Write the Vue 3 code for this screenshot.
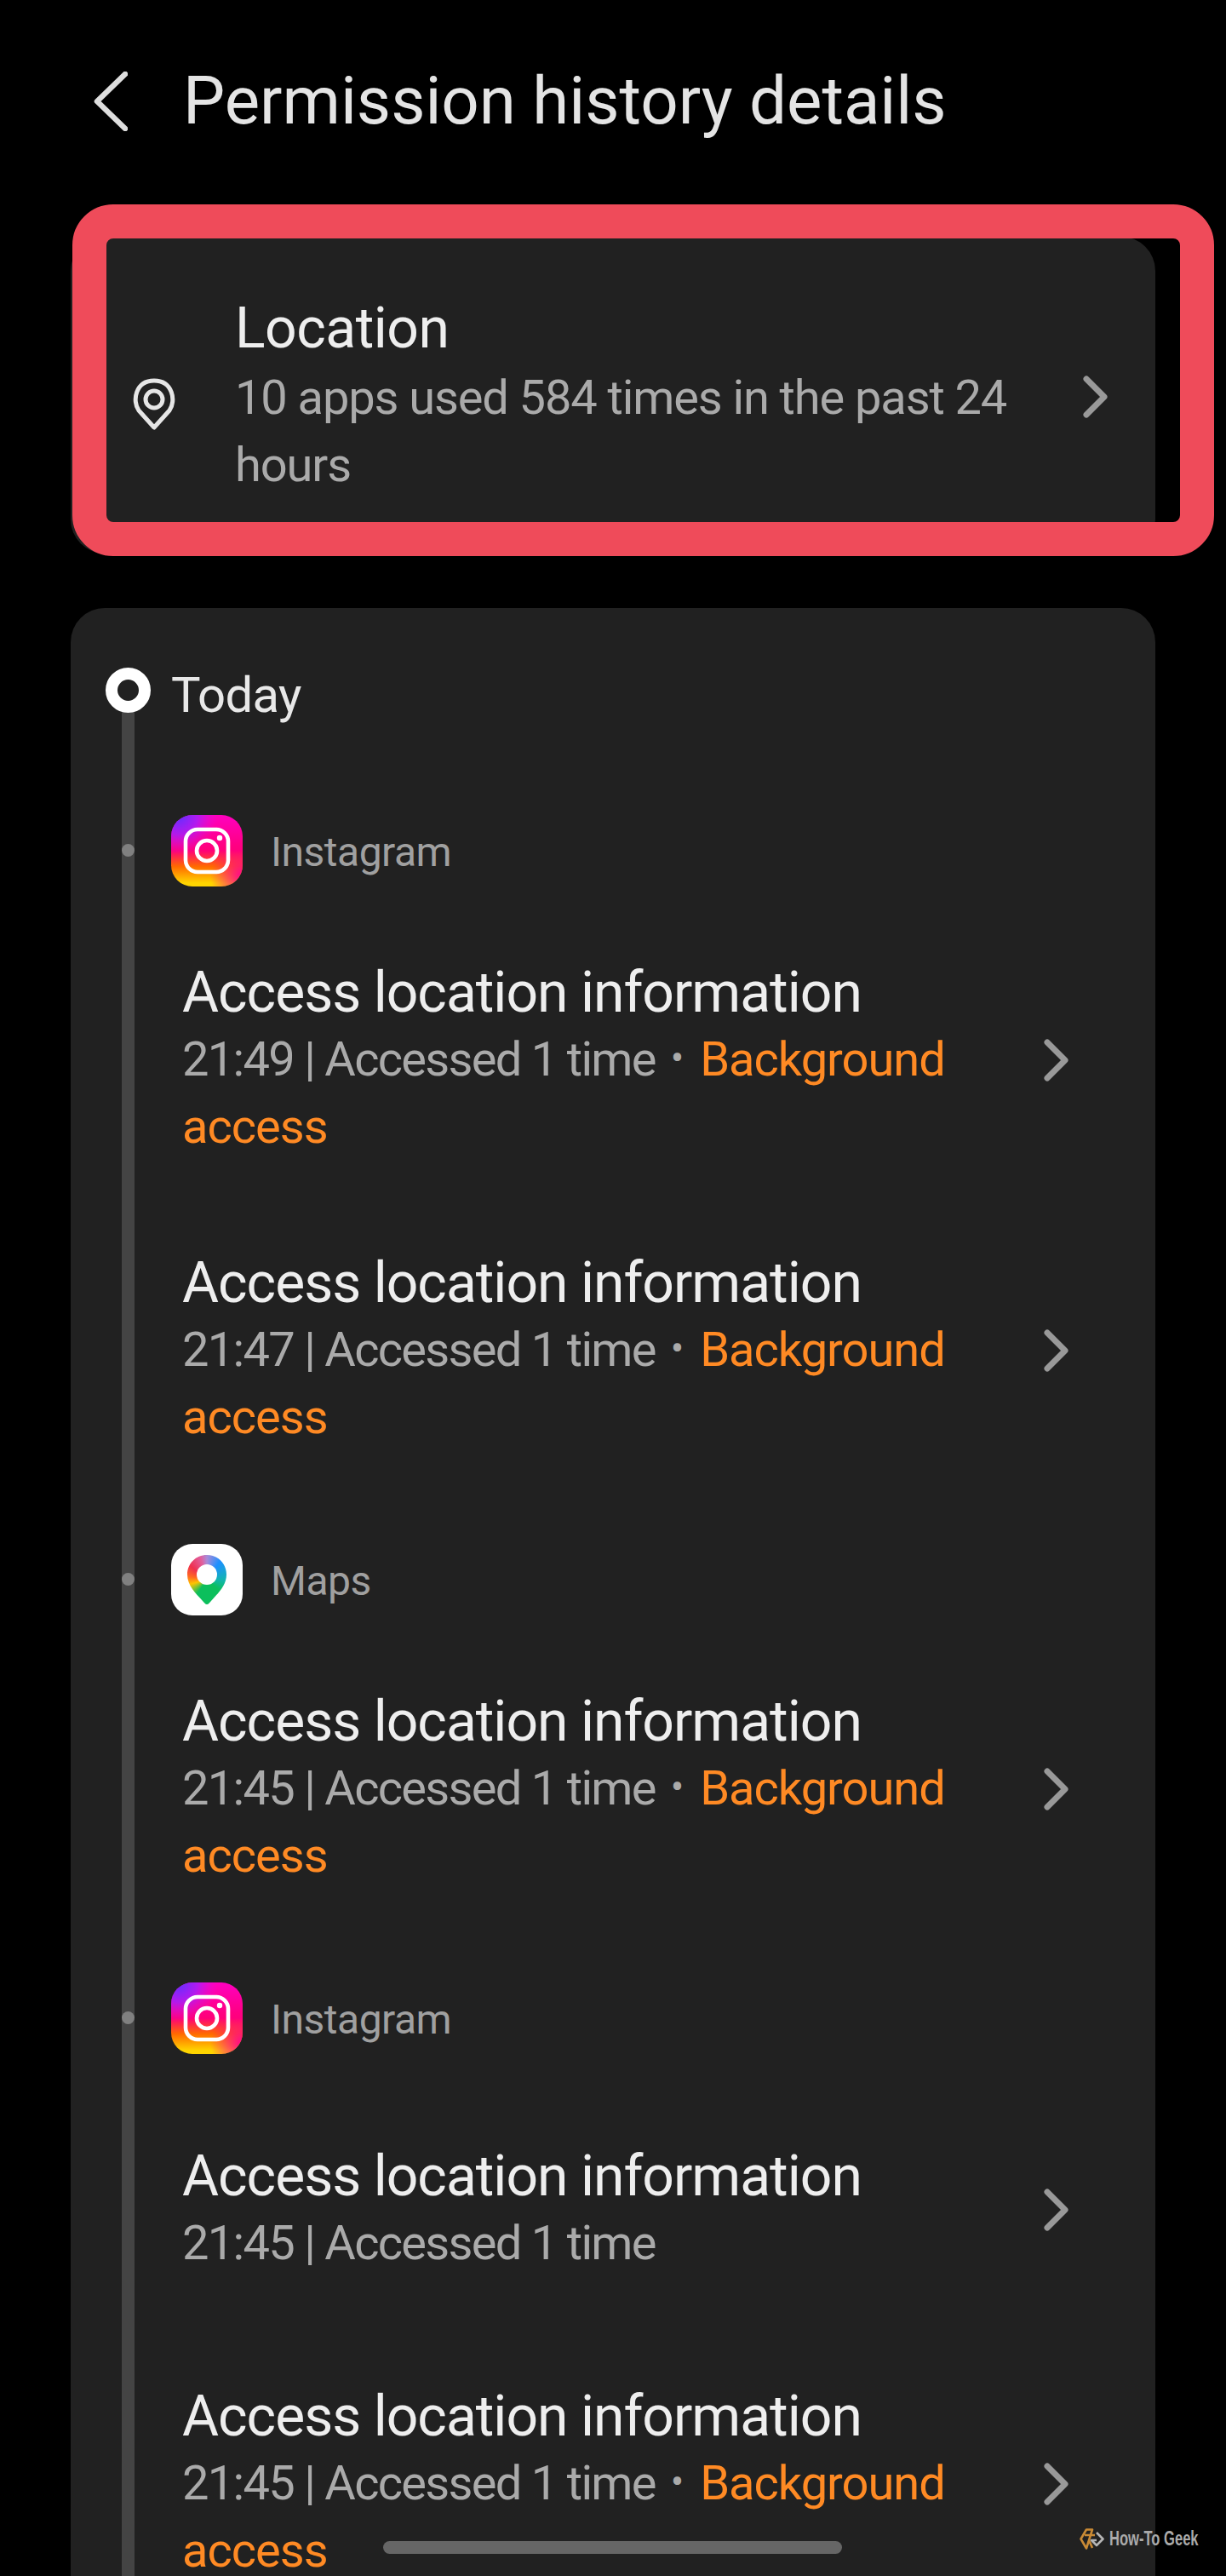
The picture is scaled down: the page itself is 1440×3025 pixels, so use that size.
<template>
  <div class="page">
    <div class="head">
      <svg class="back" width="40" height="70" viewBox="0 0 40 70">
        <path d="M37 3 L4 35 L37 67" fill="none" stroke="#dedede" stroke-width="6.5" stroke-linecap="round" stroke-linejoin="round" />
      </svg>
      <div class="headTitle">Permission history details</div>
    </div>

    <div class="summary">
      <svg class="pin" width="50" height="61" viewBox="0 0 50 61">
        <path d="M25 58 L7 38 C-1 27 3 3 25 3 C47 3 51 27 43 38 Z" fill="none" stroke="#e6e6e6" stroke-width="5" stroke-linejoin="round" />
        <circle cx="25" cy="25" r="10" fill="none" stroke="#e6e6e6" stroke-width="5" />
      </svg>
      <div class="summaryText">
        <div class="summaryTitle">Location</div>
        <div class="sub summarySub">10 apps used 584 times in the past 24 hours</div>
      </div>
      <svg class="chev" width="29" height="50" viewBox="0 0 29 50">
        <path d="M4 4 L25 25 L4 46" fill="none" stroke="#999" stroke-width="7" stroke-linecap="round" stroke-linejoin="round" />
      </svg>
    </div>

    <div class="card">
      <div class="timeline">
        <div class="today">
          <span class="ring"></span>
          <span class="todayText">Today</span>
        </div>

        <div v-for="g in groups" :key="g.id" class="group">
          <div class="appHead">
            <span class="tick"></span>
            <svg v-if="g.app === 'Instagram'" class="appIcon" width="84" height="84" viewBox="0 0 84 84">
              <defs>
                <linearGradient :id="'igBase' + g.id" x1="0" y1="0" x2="0" y2="1">
                  <stop offset="0" stop-color="#ff00c0" />
                  <stop offset="0.5" stop-color="#ff0078" />
                  <stop offset="0.72" stop-color="#ff6a00" />
                  <stop offset="0.95" stop-color="#ffd400" />
                </linearGradient>
                <radialGradient :id="'igPurple' + g.id" cx="0.1" cy="0" r="0.55">
                  <stop offset="0" stop-color="#5a30ff" />
                  <stop offset="0.5" stop-color="#a020ff" stop-opacity="0.8" />
                  <stop offset="1" stop-color="#e010e0" stop-opacity="0" />
                </radialGradient>
                <radialGradient :id="'igPink' + g.id" cx="1" cy="0.85" r="0.45">
                  <stop offset="0" stop-color="#ff0090" />
                  <stop offset="1" stop-color="#ff0090" stop-opacity="0" />
                </radialGradient>
              </defs>
              <rect width="84" height="84" rx="25" :fill="'url(#igBase' + g.id + ')'" />
              <rect width="84" height="84" rx="25" :fill="'url(#igPink' + g.id + ')'" />
              <rect width="84" height="84" rx="25" :fill="'url(#igPurple' + g.id + ')'" />
              <rect x="17" y="17" width="50" height="50" rx="14" fill="none" stroke="#fff" stroke-width="4.6" />
              <circle cx="42" cy="42" r="12" fill="none" stroke="#fff" stroke-width="4.6" />
              <circle cx="57" cy="27" r="3.2" fill="#fff" />
            </svg>
            <span v-else class="mapsIcon"><span class="mapsPin"><span class="mapsHole"></span></span></span>
            <span class="appName">{{ g.app }}</span>
          </div>

          <div v-for="(r, i) in g.rows" :key="i" class="row" :class="{ single: !r.bg }">
            <div class="rowText">
              <div class="rowTitle">Access location information</div>
              <div class="sub">
                <span class="used">{{ r.time }} | Accessed 1 time</span>
                <template v-if="r.bg"> <span class="sep">•</span> <span class="orange">Background access</span></template>
              </div>
            </div>
            <svg class="chev" width="29" height="50" viewBox="0 0 29 50">
              <path d="M4 4 L25 25 L4 46" fill="none" stroke="#999" stroke-width="7" stroke-linecap="round" stroke-linejoin="round" />
            </svg>
          </div>
        </div>
      </div>
    </div>

    <div class="frame"></div>
    <div class="homeBar"></div>
    <div class="mark">
      <svg width="29" height="25" viewBox="0 0 29 25">
        <path d="M8 1.5 L15 1.5 L8 23.5 L1.5 12.5 Z M6 8 L18 8 M11 14 L15 23" fill="none" stroke="#c98a35" stroke-width="2.6" stroke-linejoin="round" />
        <path d="M20 5 L27.5 12.5 L20 20 L14 14 L20 14" fill="none" stroke="#b5b5b5" stroke-width="2.6" stroke-linejoin="round" />
      </svg>
      <span class="markText">How-To Geek</span>
    </div>
  </div>
</template>

<script setup>
const groups = [
  {
    id: 1,
    app: "Instagram",
    rows: [
      { time: "21:49", bg: true },
      { time: "21:47", bg: true },
    ],
  },
  {
    id: 2,
    app: "Maps",
    rows: [{ time: "21:45", bg: true }],
  },
  {
    id: 3,
    app: "Instagram",
    rows: [
      { time: "21:45", bg: false },
      { time: "21:45", bg: true },
    ],
  },
];
</script>

<style>
html, body { background: #000; }
</style>

<style scoped>
.page {
  position: relative;
  width: 1440px;
  height: 3025px;
  overflow: hidden;
  background: #000;
  font-family: Roboto, "Liberation Sans", sans-serif;
  color: #eee;
}

.head {
  display: flex;
  align-items: center;
  gap: 65px;
  height: 278px;
  padding: 0 0 40px 110px;
  box-sizing: border-box;
}

.headTitle {
  font-size: 78px;
  line-height: 80px;
  color: #e4e4e4;
}

.summary {
  display: flex;
  align-items: center;
  box-sizing: border-box;
  width: 1274px;
  height: 372px;
  margin-left: 83px;
  padding-left: 73px;
  background: #212121;
  border-radius: 40px;
}

.pin { flex: none; margin-top: 20px; }

.summaryText {
  width: 963px;
  margin-left: 70px;
  padding-top: 2px;
}

.summaryTitle {
  font-size: 66px;
  line-height: 84px;
  letter-spacing: -0.5px;
  color: #eee;
}

.sub {
  font-size: 56px;
  line-height: 79px;
  letter-spacing: -1px;
  color: #aaa;
}

.summarySub { letter-spacing: -1.1px; }

.summary .chev { margin-left: 33px; margin-top: 4px; flex: none; }

.card {
  margin: 64px 0 0 83px;
  width: 1274px;
  min-height: 2400px;
  background: #212121;
  border-radius: 40px;
  padding-top: 70px;
}

.timeline {
  position: relative;
  padding-left: 41px;
}

.timeline::before {
  content: "";
  position: absolute;
  left: 60px;
  top: 26px;
  bottom: 0;
  width: 15px;
  background: #444;
}

.today {
  position: relative;
  display: flex;
  align-items: center;
  gap: 24px;
  height: 53px;
  font-size: 58px;
  letter-spacing: -0.7px;
  color: #e8e8e8;
}

.todayText { padding-top: 10px; }

.ring {
  box-sizing: border-box;
  width: 53px;
  height: 53px;
  border: 14.5px solid #fff;
  border-radius: 50%;
  background: #212121;
}

.group { margin-left: 77px; }

.today + .group { margin-top: 120px; }

.group + .group { margin-top: 57px; }

.appHead {
  position: relative;
  display: flex;
  align-items: center;
  height: 84px;
  margin-bottom: 33px;
}

.tick {
  position: absolute;
  left: -58px;
  top: 34px;
  width: 15px;
  height: 15px;
  border-radius: 50%;
  background: #808080;
}

.appIcon { flex: none; }

.mapsIcon {
  flex: none;
  display: flex;
  justify-content: center;
  padding-top: 13px;
  box-sizing: border-box;
  width: 84px;
  height: 84px;
  border-radius: 25px;
  background: #fff;
}

.mapsPin {
  display: block;
  position: relative;
  width: 46px;
  height: 58px;
  background: conic-gradient(#a98bd8 0deg, #1e90ff 35deg, #12b5b0 90deg, #0cbf5c 130deg, #0cbf5c 215deg, #ffc400 255deg, #ff6a20 280deg, #ef3050 310deg, #e0609f 345deg, #a98bd8 360deg);
  clip-path: path("M23 58 C21 58 20 56 18 54 C10 45 0 36 0 23 C0 10 10 0 23 0 C36 0 46 10 46 23 C46 36 36 45 28 54 C26 56 25 58 23 58 Z");
}

.mapsHole {
  position: absolute;
  left: 11px;
  top: 11px;
  width: 24px;
  height: 24px;
  border-radius: 50%;
  background: #fff;
}

.appName {
  margin-left: 33px;
  padding-top: 3px;
  font-size: 48px;
  letter-spacing: -0.5px;
  color: #a0a0a0;
}

.row {
  display: flex;
  align-items: center;
  padding: 52px 0 52px 13px;
}

.row.single { padding: 71px 0 72px 13px; }

.rowText {
  width: 966px;
  margin-right: 46px;
}

.rowTitle {
  font-size: 66px;
  line-height: 79px;
  letter-spacing: -1px;
  color: #eee;
}

.used { letter-spacing: -1.7px; }

.sep {
  display: inline-block;
  margin: 0 7px 0 18px;
  font-size: 46px;
  vertical-align: 5px;
  line-height: 1;
}

.orange { color: #ff8a24; }

.chev { flex: none; }

.frame {
  position: absolute;
  left: 85px;
  top: 240px;
  width: 1341px;
  height: 413px;
  box-sizing: border-box;
  border: 40px solid #ef4b5a;
  border-radius: 48px;
  pointer-events: none;
}

.homeBar {
  position: absolute;
  left: 450px;
  top: 2984px;
  width: 539px;
  height: 15px;
  border-radius: 8px;
  background: #666;
}

.mark {
  position: absolute;
  left: 1268px;
  top: 2968px;
  display: flex;
  align-items: center;
  gap: 6px;
  font-family: "Liberation Sans", sans-serif;
  font-size: 23px;
  font-weight: 700;
  color: #aaa;
  white-space: nowrap;
}

.markText {
  display: inline-block;
  transform: scaleX(0.72);
  transform-origin: left center;
}
</style>
